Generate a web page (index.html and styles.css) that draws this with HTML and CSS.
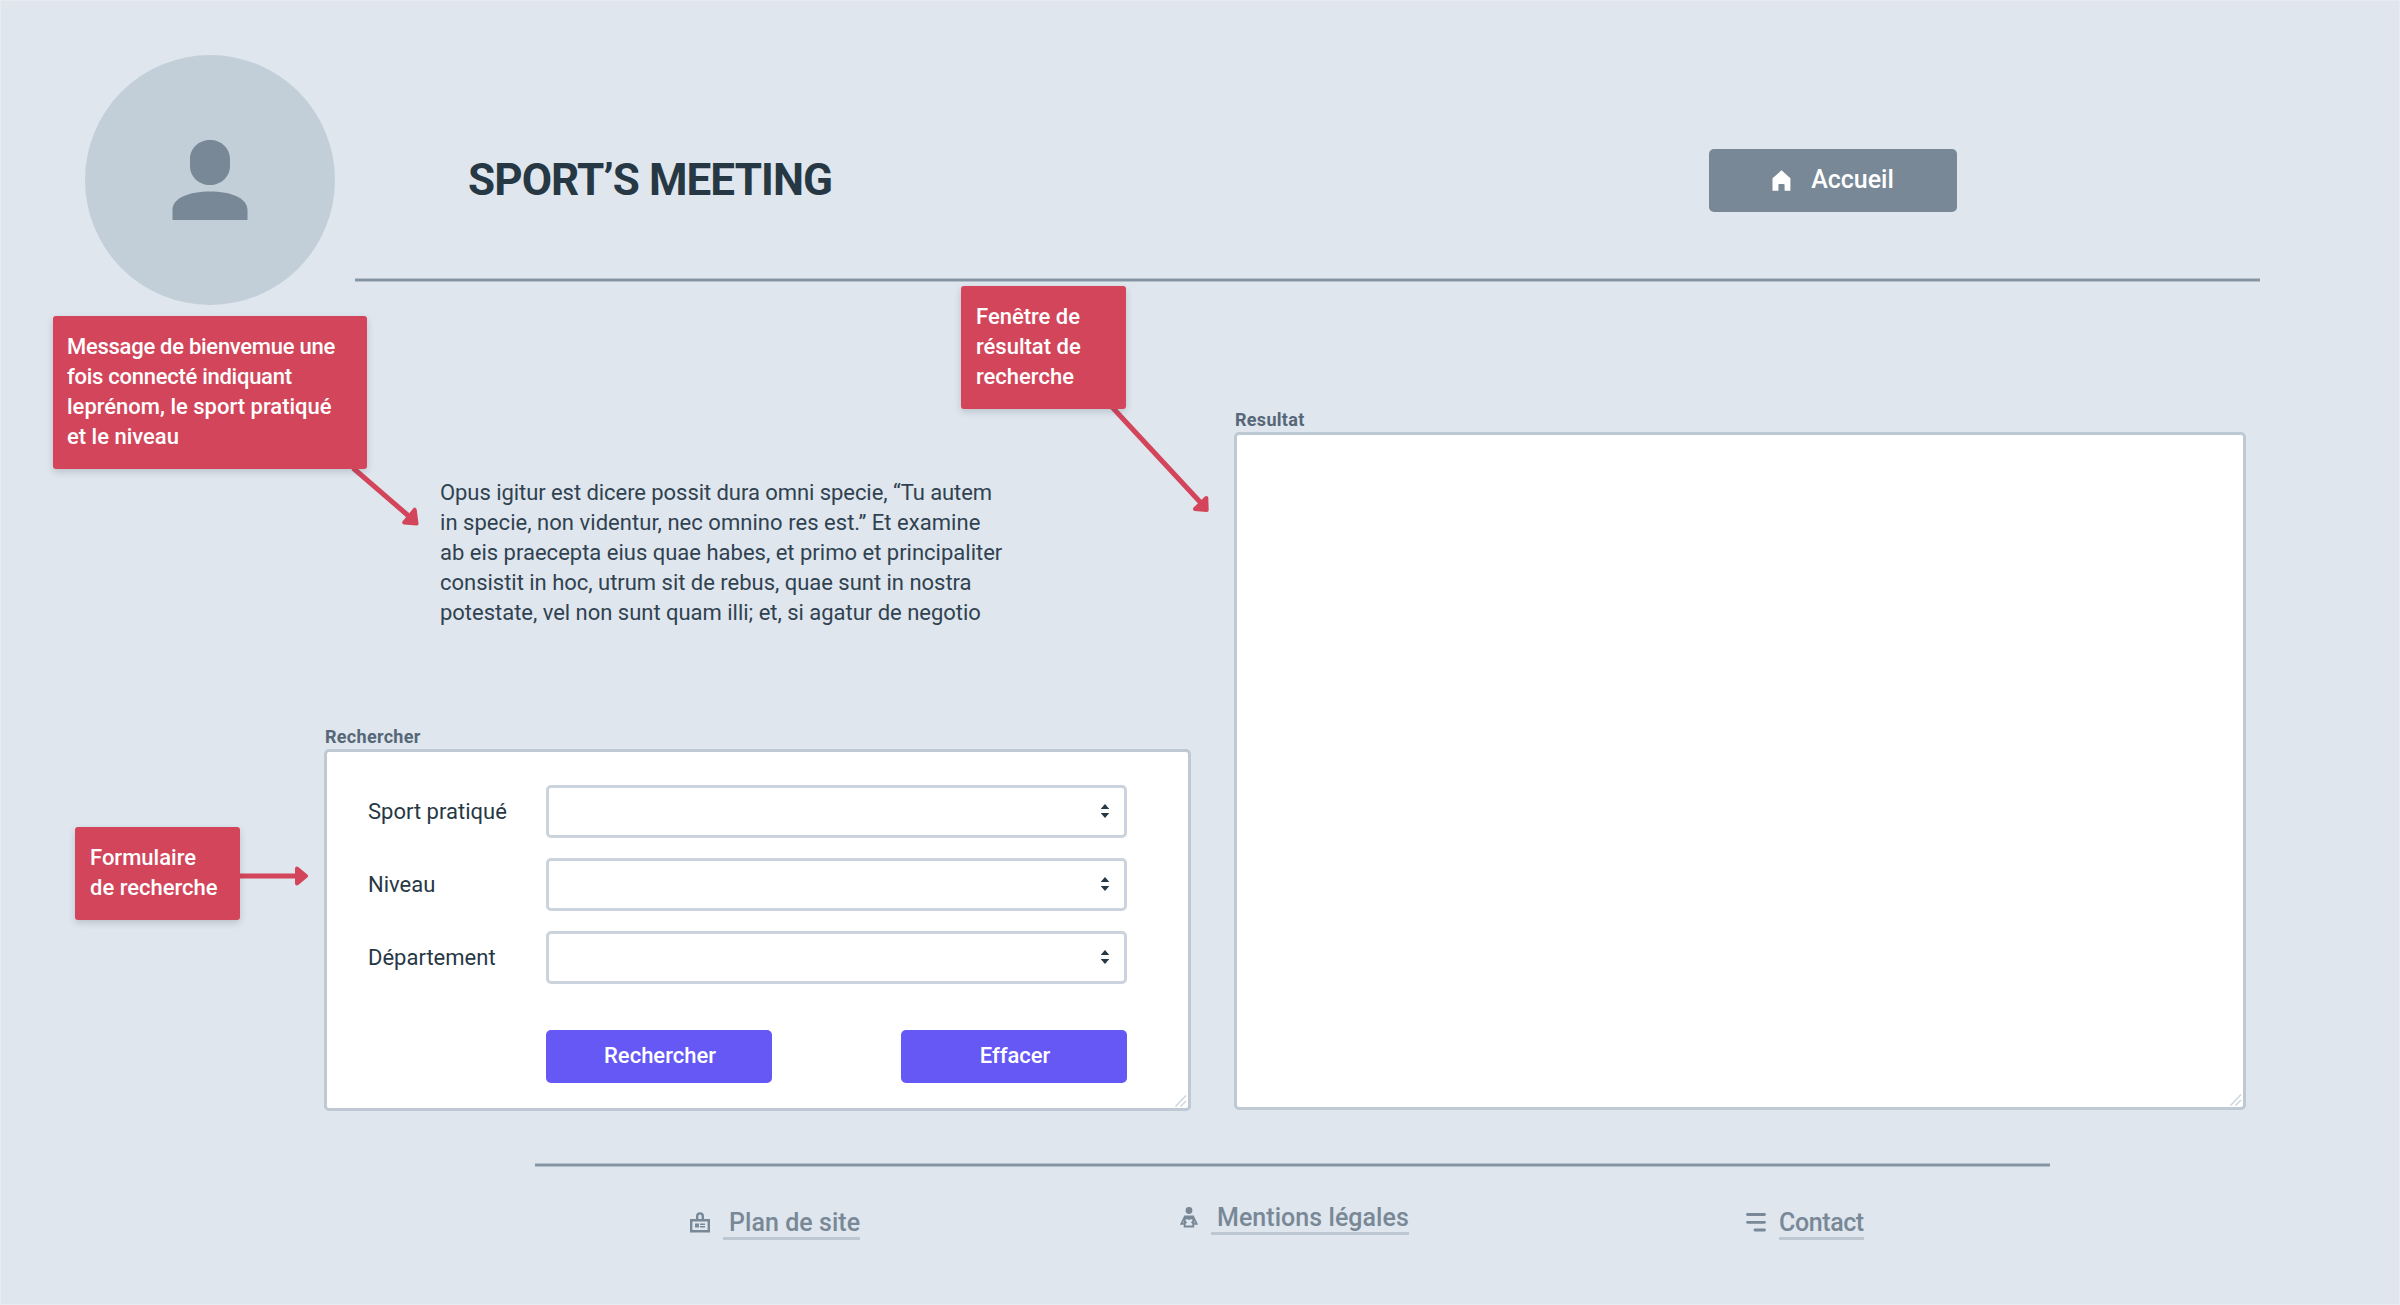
FILE: index.html
```html
<!DOCTYPE html>
<html lang="fr">
<head>
<meta charset="utf-8">
<title>Sport’s Meeting</title>
<link rel="stylesheet" href="styles.css">
</head>
<body>
<div class="page">
  <header class="header">
    <div class="avatar">
      <svg width="76" height="81" viewBox="0 0 76 81"><path d="M38 0C49 0 58 8 58 19v7c0 11-9 19-20 19S18 37 18 26v-7C18 8 27 0 38 0zM0.500 80V70C0.500 58 17 51.500 38 51.500S75.500 58 75.500 70v10z"/></svg>
    </div>
    <div class="banner">
      <h1 class="title">SPORT’S MEETING</h1>
      <a class="home">
        <svg width="19" height="21" viewBox="0 0 19 21"><path d="M9.500 0.300 18.400 8.300V20.700H12.600V15Q12.600 14 11.600 14H7.400Q6.400 14 6.400 15V20.700H0.500V8.300z"/></svg>
        <span>Accueil</span>
      </a>
    </div>
  </header>

  <main class="main">
    <div class="left">
      <p class="welcome"><span class="line line-1">Opus igitur est dicere possit dura omni specie, “Tu autem</span><span class="line line-2">in specie, non videntur, nec omnino res est.” Et examine</span><span class="line">ab eis praecepta eius quae habes, et primo et principaliter</span><span class="line line-4">consistit in hoc, utrum sit de rebus, quae sunt in nostra</span><span class="line line-4">potestate, vel non sunt quam illi; et, si agatur de negotio</span></p>
      <h2 class="label">Rechercher</h2>
      <form class="panel form">
        <div class="row">
          <span class="name">Sport pratiqué</span>
          <div class="select"><svg width="10" height="14" viewBox="0 0 10 14"><path d="M5 0 9.300 5H.7zM5 14 .7 9h8.600z"/></svg></div>
        </div>
        <div class="row">
          <span class="name">Niveau</span>
          <div class="select"><svg width="10" height="14" viewBox="0 0 10 14"><path d="M5 0 9.300 5H.7zM5 14 .7 9h8.600z"/></svg></div>
        </div>
        <div class="row">
          <span class="name">Département</span>
          <div class="select"><svg width="10" height="14" viewBox="0 0 10 14"><path d="M5 0 9.300 5H.7zM5 14 .7 9h8.600z"/></svg></div>
        </div>
        <div class="actions">
          <button type="button" class="button">Rechercher</button>
          <button type="button" class="button">Effacer</button>
        </div>
        <svg class="grip" width="12" height="12" viewBox="0 0 12 12"><path d="M.5 11.500 11 .5M5.500 11.500 11 6"/></svg>
      </form>
    </div>
    <div class="right">
      <h2 class="label">Resultat</h2>
      <div class="panel result">
        <svg class="grip" width="12" height="12" viewBox="0 0 12 12"><path d="M.5 11.500 11 .5M5.500 11.500 11 6"/></svg>
      </div>
    </div>
  </main>

  <footer class="footer">
    <div class="link">
      <svg width="20" height="21" viewBox="0 0 20 21"><path class="stroke" d="M1.200 8.200h17.600v11H1.200zM7.200 8V4.200a2.800 2.800 0 0 1 5.600 0V8"/><path d="M5 11.500h4v4H5zM10 11.500h5V13h-5zM10 14h5v1.500h-5z"/></svg>
      <span class="text spaced">Plan de site</span>
    </div>
    <div class="link legal">
      <svg width="18" height="21" viewBox="0 0 18 21"><circle cx="9" cy="3.500" r="3.400"/><path class="book" d="M4.700 11.400h8.600v8.100H4.700z"/><path class="book" d="M4.700 9.800 1.400 16.700h2.500M13.300 9.800l3.300 6.900h-2.500"/><path d="M4 8.600h10v2.700L9 12.800 4 11.300zM5 13.700 7.300 15.200 5 17.200zM13 13.700 10.700 15.200 13 17.200z"/></svg>
      <span class="text spaced">Mentions légales</span>
    </div>
    <div class="link contact">
      <svg width="20" height="21" viewBox="0 0 20 21"><path class="bars" d="M1.500 2.500h17M1.500 10.300h17M9 18h9.500"/></svg>
      <span class="text">Contact</span>
    </div>
  </footer>

  <svg class="arrows" width="2400" height="1305" viewBox="0 0 2400 1305">
    <path class="shaft" d="M353 468 411 518M1112 407 1201 503M238 876H297"/>
    <path class="head" d="M416.500 523.500 404.200 522.500 414.700 509.700zM1206.700 510 1195 509 1206.300 498zM306 876 297 868.500V883.500z"/>
  </svg>
  <div class="note note-welcome"><span class="line tight">Message de bienvemue une</span><span class="line tight">fois connecté indiquant</span><span class="line">leprénom, le sport pratiqué</span><span class="line">et le niveau</span></div>
  <div class="note note-result"><span class="line">Fenêtre de</span><span class="line">résultat de</span><span class="line">recherche</span></div>
  <div class="note note-form"><span class="line">Formulaire</span><span class="line">de recherche</span></div>
</div>
</body>
</html>
```
FILE: styles.css
```css
* { box-sizing: border-box; }

body {
  margin: 0;
  background: #dfe6ee;
  color: #273845;
  font-family: Roboto, "Open Sans", sans-serif;
  font-size: 22px;
  line-height: 30px;
}

h1, h2, p { margin: 0; }
svg { display: block; flex: none; }

.page {
  position: relative;
  width: 2400px;
  height: 1305px;
  overflow: hidden;
  box-shadow: inset 0 0 0 1px #e6ecf1;
}

.header {
  display: flex;
  gap: 20px;
  height: 305px;
  padding: 55px 140px 0 85px;
}

.avatar {
  display: flex;
  flex: none;
  justify-content: center;
  width: 250px;
  height: 250px;
  padding-top: 85px;
  border-radius: 50%;
  background: #c3cfd8;
}
.avatar svg { fill: #788896; }

.banner {
  display: flex;
  flex: 1;
  align-items: center;
  justify-content: space-between;
  height: 227px;
  padding: 23px 303px 0 113px;
  background: linear-gradient(#b3bfca 1px, #8494a2 1px 3px, #b3bfca 3px) bottom / 100% 4px no-repeat;
}

.title {
  font-size: 44px;
  line-height: 56px;
  letter-spacing: -0.9px;
}

.home {
  display: flex;
  align-items: center;
  justify-content: center;
  gap: 20px;
  width: 248px;
  height: 63px;
  border-radius: 5px;
  background: #788896;
  color: #fff;
  font-size: 25px;
  font-weight: 500;
}
.home svg { fill: #fff; }

.main {
  display: flex;
  gap: 43px;
  height: 806px;
  padding-left: 324px;
}

.left {
  width: 867px;
  padding-top: 173px;
}
.right {
  width: 1012px;
  padding-top: 105px;
}

.line { display: block; white-space: nowrap; }

.welcome {
  margin: 0 0 99px 116px;
  color: #304250;
}
.line-1 { letter-spacing: -0.06px; }
.line-2 { letter-spacing: 0.04px; }
.line-4 { letter-spacing: -0.02px; }

.label {
  margin-bottom: 2px;
  padding-left: 1px;
  color: #566878;
  font-size: 18px;
  line-height: 20px;
  letter-spacing: 0.3px;
}

.panel {
  position: relative;
  border: 3px solid #bec9d3;
  border-radius: 5px;
  background: #fff;
}
.result { height: 678px; }

.form {
  height: 362px;
  padding: 33px 61px 0 41px;
}

.row {
  display: grid;
  grid-template-columns: 178px 1fr;
  align-items: center;
  height: 53px;
  margin-bottom: 20px;
}

.select {
  display: flex;
  align-items: center;
  justify-content: flex-end;
  height: 53px;
  padding: 0 14px 1px 0;
  border: 3px solid #cbd4dc;
  border-radius: 5px;
}
.select svg { fill: #273845; }

.actions {
  display: flex;
  justify-content: space-between;
  margin: 46px 0 0 178px;
}

.button {
  width: 226px;
  height: 53px;
  padding: 0 0 1px 2px;
  border: 0;
  border-radius: 5px;
  background: #6658f5;
  color: #fff;
  font: 500 22px/30px Roboto, "Open Sans", sans-serif;
}

.grip {
  position: absolute;
  right: 1px;
  bottom: 1px;
  fill: none;
  stroke: #ccd6df;
  stroke-width: 1.500;
}

.footer {
  display: flex;
  align-items: flex-start;
  width: 1515px;
  margin: 52px 0 0 535px;
  padding: 45px 0 0 155px;
  background: linear-gradient(#b3bfca 1px, #8494a2 1px 3px, #b3bfca 3px) top / 100% 4px no-repeat;
  color: #788896;
  font-size: 25px;
  font-weight: 500;
}

.link {
  display: flex;
  gap: 13px;
  width: 490px;
  fill: #788896;
}
.link svg { margin-top: 4px; }
.link.legal { width: 566px; margin-top: -5px; }
.contact { width: auto; }

.stroke { fill: none; stroke: #788896; stroke-width: 2.400; }
.book { fill: none; stroke: #788896; stroke-width: 1.900; }
.bars { stroke: #788896; stroke-width: 2.800; stroke-linecap: round; }

.text { height: 32px; border-bottom: 3px solid #bcc7d2; }
.text.spaced { padding-left: 6px; letter-spacing: 0.05px; }
.contact .text { letter-spacing: -0.4px; }

.arrows {
  position: absolute;
  left: 0;
  top: 0;
}
.shaft { fill: none; stroke: #d3455b; stroke-width: 5; }
.head { fill: #d3455b; stroke: #d3455b; stroke-width: 4; stroke-linejoin: round; }

.note {
  position: absolute;
  padding: 16px 14px 17px;
  border-radius: 3px;
  background: #d3455b;
  box-shadow: 0 3px 7px rgba(39, 56, 69, 0.2);
  color: #fff;
  font-weight: 500;
}
.tight { letter-spacing: -0.27px; }

.note-welcome { left: 53px; top: 316px; width: 314px; }
.note-result { left: 961px; top: 286px; width: 165px; padding-left: 15px; }
.note-form { left: 75px; top: 827px; width: 165px; padding-left: 15px; }
```
